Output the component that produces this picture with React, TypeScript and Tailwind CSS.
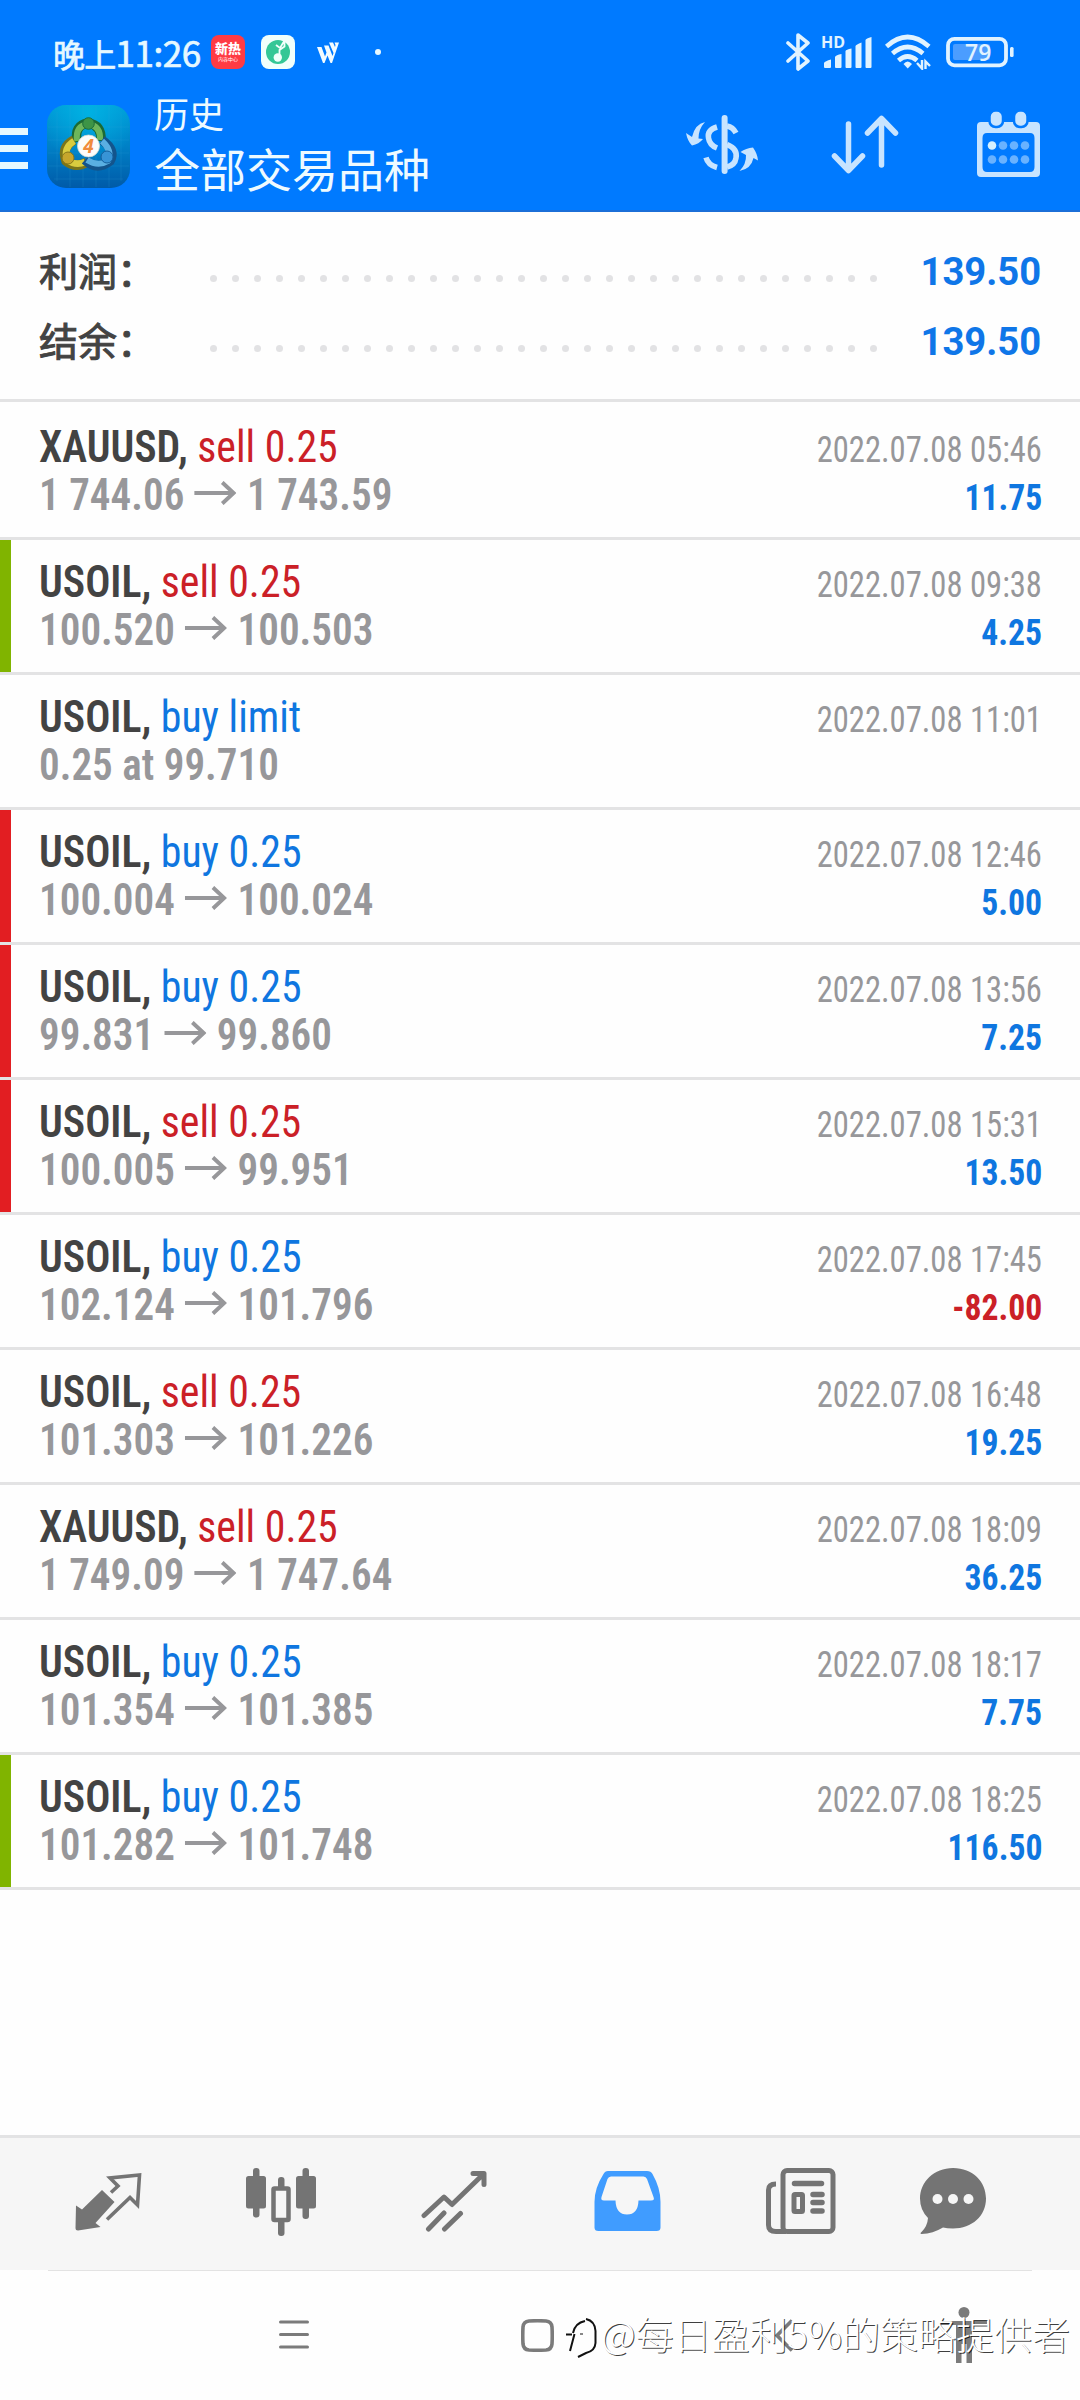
type Deal = {
  symbol: string
  action: string
  side: 'buy' | 'sell'
  from: string
  to?: string
  time: string
  profit?: string
  mark?: 'green' | 'red'
}

const deals: Deal[] = [
  { symbol: 'XAUUSD', action: 'sell 0.25', side: 'sell', from: '1 744.06', to: '1 743.59', time: '2022.07.08 05:46', profit: '11.75' },
  { symbol: 'USOIL', action: 'sell 0.25', side: 'sell', from: '100.520', to: '100.503', time: '2022.07.08 09:38', profit: '4.25', mark: 'green' },
  { symbol: 'USOIL', action: 'buy limit', side: 'buy', from: '0.25 at 99.710', time: '2022.07.08 11:01' },
  { symbol: 'USOIL', action: 'buy 0.25', side: 'buy', from: '100.004', to: '100.024', time: '2022.07.08 12:46', profit: '5.00', mark: 'red' },
  { symbol: 'USOIL', action: 'buy 0.25', side: 'buy', from: '99.831', to: '99.860', time: '2022.07.08 13:56', profit: '7.25', mark: 'red' },
  { symbol: 'USOIL', action: 'sell 0.25', side: 'sell', from: '100.005', to: '99.951', time: '2022.07.08 15:31', profit: '13.50', mark: 'red' },
  { symbol: 'USOIL', action: 'buy 0.25', side: 'buy', from: '102.124', to: '101.796', time: '2022.07.08 17:45', profit: '-82.00' },
  { symbol: 'USOIL', action: 'sell 0.25', side: 'sell', from: '101.303', to: '101.226', time: '2022.07.08 16:48', profit: '19.25' },
  { symbol: 'XAUUSD', action: 'sell 0.25', side: 'sell', from: '1 749.09', to: '1 747.64', time: '2022.07.08 18:09', profit: '36.25' },
  { symbol: 'USOIL', action: 'buy 0.25', side: 'buy', from: '101.354', to: '101.385', time: '2022.07.08 18:17', profit: '7.75' },
  { symbol: 'USOIL', action: 'buy 0.25', side: 'buy', from: '101.282', to: '101.748', time: '2022.07.08 18:25', profit: '116.50', mark: 'green' },
]

const cjk = "font-['Noto_Sans_CJK_SC',sans-serif]"

function StatusBar() {
  return (
    <div className="flex h-[104px] items-center pl-[53px] pr-[66px]">
      <span className={`${cjk} w-[158px] whitespace-nowrap text-[32px] leading-[40px] tracking-[-0.8px] text-[#e6f8ff] [-webkit-text-stroke:0.7px]`}>
        晚上<span className="text-[35px] tracking-[-0.4px]">11:26</span>
      </span>
      <div className={`${cjk} flex size-[34px] flex-col items-center justify-center rounded-[8px] bg-[#ff3b44] text-white`}>
        <span className="text-[13px] leading-[14px] font-black">新热</span>
        <span className="text-[5px] leading-[8px]">内容中心</span>
      </div>
      <svg className="ml-4 size-[34px]" viewBox="0 0 34 34">
        <rect width="34" height="34" rx="8" fill="#f1fffb" />
        <circle cx="17" cy="17" r="12" fill="#35c796" />
        <path d="M15 10 L19 13 L23.500 5.500 V11.500 L18.500 15 V22" fill="none" stroke="#f1fffb" strokeWidth="1.800" />
        <circle cx="16.800" cy="22.500" r="4.200" fill="#f1fffb" />
      </svg>
      <svg className="ml-[22px] h-[21px] w-[22px]" viewBox="0 0 22 21" fill="#f2fbff">
        <path d="M0 5 H4.500 L8 14.500 L9.500 10.500 L7 3.500 H11.500 L15.500 14 L16.500 11 L12 0.500 H16 L18 5 L18.500 3 L17.500 0.500 H22 L15 21 H13.500 L10.500 13.500 L7.500 21 H6 Z" />
      </svg>
      <span className="ml-9 size-[6px] rounded-full bg-[#e6f8ff]" />

      <div className="ml-auto flex items-center text-[#e1f3ff]">
        <svg className="h-[40px] w-[24px]" viewBox="0 0 24 40" fill="none" stroke="currentColor" strokeWidth="3.600" strokeLinecap="round" strokeLinejoin="round">
          <path d="M2 11 L22 29 L12 37 V3 L22 11 L2 29" />
        </svg>
        <svg className="ml-[11px] h-[40px] w-[51px] overflow-visible" viewBox="821 32 51 40" fill="currentColor">
          <text x="821" y="48" fontSize="16" fontWeight="700" fontFamily="Open Sans">HD</text>
          <path d="M824 67V63Q825 61 831 59.500V67Q831 68 830 68H825Q824 68 824 67ZM835 67V57Q836 55 841.500 54V67Q841.500 68 840.500 68H836Q835 68 835 67ZM845.500 67V51Q846 49.500 851.500 48.500V67Q851.500 68 850.500 68H846.500Q845.500 68 845.500 67ZM855.500 67V46Q856 44.500 861.500 42.500V67Q861.500 68 860.500 68H856.500Q855.500 68 855.500 67ZM865.500 67V40Q866 38.500 871.500 37V67Q871.500 68 870.500 68H866.500Q865.500 68 865.500 67Z" />
        </svg>
        <svg className="ml-[13px] h-[36px] w-[46px]" viewBox="885 35 46 36" fill="none" stroke="currentColor" strokeWidth="4.600">
          <path d="M886.500 47.500Q907.500 28.500 929 47.500M892.500 54.500Q907.500 41.500 923 54.500M898.500 61.500Q907.500 53.500 917 61.500" />
          <path d="M903.500 65Q907.500 60 912 65L907.700 69.500Z" fill="currentColor" stroke="none" />
          <path d="M917 64L922 69.500V61M925.500 70V62.500L930 67" strokeWidth="2.400" />
        </svg>
        <svg className="ml-[15px] h-[32px] w-[68px]" viewBox="946 36 68 32">
          <rect x="953" y="44" width="37" height="16" rx="2" fill="#4b9dff" />
          <rect x="948" y="38.800" width="58" height="26.500" rx="6.500" fill="none" stroke="currentColor" strokeWidth="3.800" />
          <rect x="1010" y="47" width="3.600" height="10" rx="1.500" fill="currentColor" />
          <text x="965" y="60.500" fontSize="23" fontWeight="600" fontFamily="Open Sans" fill="currentColor">79</text>
        </svg>
      </div>
    </div>
  )
}

function AppLogo() {
  return (
    <svg className="ml-[19px] mt-[1px] size-[83px]" viewBox="0 0 83 83">
      <defs>
        <linearGradient id="tile" x1="0" y1="0" x2="0" y2="1">
          <stop offset="0" stopColor="#009bd6" />
          <stop offset="0.5" stopColor="#0080c6" />
          <stop offset="1" stopColor="#005aa8" />
        </linearGradient>
        <radialGradient id="glow" cx="0.5" cy="0.1" r="0.6">
          <stop offset="0" stopColor="#00bdea" stopOpacity="0.7" />
          <stop offset="1" stopColor="#00bdea" stopOpacity="0" />
        </radialGradient>
      </defs>
      <rect width="83" height="83" rx="19" fill="url(#tile)" />
      <rect width="83" height="83" rx="19" fill="url(#glow)" />
      <path d="M10 7V76M23 1V82M36 1V82M49 1V82M62 1V82M74 7V76M1 22H82M1 35H82M1 48H82M1 61H82M7 74H76" stroke="#35a8df" strokeWidth="0.6" opacity="0.3" />
      <path d="M30 37Q27 20 41 18Q55 20 54 36" fill="none" stroke="#1b6a35" strokeWidth="9.500" />
      <path d="M30 36Q28 21 41 19Q54 21 53 35" fill="none" stroke="#6db65b" strokeWidth="6" />
      <path d="M27 35Q14 42 19 56Q29 64 40 57" fill="none" stroke="#7a751a" strokeWidth="9.500" />
      <path d="M27 36Q16 43 20 55Q29 61 38 57" fill="none" stroke="#d9cc3f" strokeWidth="6.500" />
      <path d="M55 35Q69 45 63 56Q50 66 38 55" fill="none" stroke="#13548c" strokeWidth="9.500" />
      <path d="M55 36Q66 46 61 56Q51 62 40 55" fill="none" stroke="#5aafe2" strokeWidth="6" />
      <circle cx="41.500" cy="18.500" r="5.800" fill="#3d9446" stroke="#1b6d3a" />
      <circle cx="21" cy="53" r="6" fill="#c7a62c" stroke="#867619" />
      <circle cx="60" cy="52" r="6" fill="#3894d6" stroke="#155f9c" />
      <circle cx="41.500" cy="41" r="11" fill="#fcfcfa" stroke="#cfd8d2" strokeWidth="0.8" />
      <text x="41.500" y="48" textAnchor="middle" fontSize="19" fontStyle="italic" fontWeight="700" fontFamily="Open Sans" fill="#f08b3c">4</text>
    </svg>
  )
}

function AppBar() {
  return (
    <div className="flex h-[106px] pr-10">
      <div className="mt-6 flex h-[41px] w-7 flex-col justify-between">
        <span className="h-[7px] bg-[#e6f8ff]" />
        <span className="h-[7px] bg-[#e6f8ff]" />
        <span className="h-[7px] bg-[#e6f8ff]" />
      </div>
      <AppLogo />
      <div className={`${cjk} ml-6 -mt-[11px] flex flex-col text-[#eefaff]`}>
        <span className="text-[35px] leading-[40px]">历史</span>
        <span className="mt-[6px] text-[46px] leading-[56px]">全部交易品种</span>
      </div>
      <div className="ml-auto flex text-[#c8e4ff]">
        <svg className="mt-[10px] h-[60px] w-[72px]" viewBox="686 115 72 60" fill="none" stroke="currentColor">
          <path d="M724.600 119V172" strokeWidth="6" strokeLinecap="round" />
          <path d="M717 128Q707 131 708.500 139Q709.500 146 717 149M706 158.500Q708 166 717 168.500M727 127Q733 128 736 134M727 145.500Q738 150 736 159Q735 166 727 168" strokeWidth="5.500" />
          <path d="M705 123Q695 125 692 138L686 134Q687.500 142 692 146.500Q699 145 703 140L698.500 139.500Q698.500 130 705 123ZM739.500 172Q751 170 753.500 159L758 161.500Q757.500 155 753 148.500Q746 149 740.500 153L746 156Q746.500 165 739.500 172Z" fill="currentColor" stroke="none" />
        </svg>
        <svg className="ml-[73px] mt-[10px] h-[60px] w-[68px]" viewBox="831 115 68 60" fill="none" stroke="currentColor" strokeWidth="5.500" strokeLinecap="round" strokeLinejoin="round">
          <path d="M848.500 125V171M834.500 157L848.500 171.500L862.500 157M881.500 166V120M867.500 134L881.500 119.500L895.500 134" />
        </svg>
        <svg className="ml-[78px] mt-[8px] h-[66px] w-[63px] overflow-visible" viewBox="977 112 63 66">
          <path fillRule="evenodd" d="M981 122H1036Q1040 122 1040 126V173Q1040 177 1036 177H981Q977 177 977 173V126Q977 122 981 122ZM987 133Q982.500 133 982.500 138V167Q982.500 172 987 172H1030Q1034.500 172 1034.500 167V138Q1034.500 133 1030 133Z" fill="currentColor" />
          <rect x="989.500" y="110.500" width="13.500" height="16.500" rx="6" fill="currentColor" stroke="#007aff" strokeWidth="2.500" />
          <rect x="1014" y="110.500" width="13.500" height="16.500" rx="6" fill="currentColor" stroke="#007aff" strokeWidth="2.500" />
          <g fill="#69b2ff">
            <circle cx="992" cy="145.500" r="4.300" fill="#d6f1ff" />
            <circle cx="1003" cy="145.500" r="4.300" />
            <circle cx="1014" cy="145.500" r="4.300" />
            <circle cx="1025" cy="145.500" r="4.300" />
            <circle cx="992" cy="159.500" r="4.300" />
            <circle cx="1003" cy="159.500" r="4.300" />
            <circle cx="1014" cy="159.500" r="4.300" />
            <circle cx="1025" cy="159.500" r="4.300" />
          </g>
        </svg>
      </div>
    </div>
  )
}

function SummaryRow({ label, value }: { label: string; value: string }) {
  return (
    <div className="flex h-[70px] items-center">
      <span className={`${cjk} -mt-[5px] w-[171px] whitespace-nowrap text-[39px] leading-[50px] text-[#434343] [-webkit-text-stroke:1px]`}>{label}</span>
      <div className="mt-[15px] flex w-[667px] justify-between">
        {Array.from({ length: 31 }, (_, i) => (
          <span key={i} className="size-[7px] rounded-full bg-[#e2e2e4]" />
        ))}
      </div>
      <span className="ml-auto mt-[2px] origin-right scale-x-[0.98] font-['Roboto'] text-[39px] leading-[50px] font-bold text-[#0f76e8]">{value}</span>
    </div>
  )
}

function PriceArrow() {
  return (
    <svg className="mx-[11px] inline-block h-[24px] w-[45px] align-[5px]" viewBox="0 0 45 24" fill="none" stroke="#97979a" strokeWidth="4.200">
      <path d="M0 12H42M30 1.500L42 12L30 22.500" />
    </svg>
  )
}

function DealRow({ deal, first }: { deal: Deal; first: boolean }) {
  const mark = deal.mark === 'green' ? 'bg-[#80b400]' : deal.mark === 'red' ? 'bg-[#e21e22]' : ''
  return (
    <div className={`flex border-b-[3px] border-[#e3e3e4] ${first ? 'h-[138px]' : 'h-[135px]'}`}>
      <div className={`w-[11px] ${mark}`} />
      <div className={`flex-1 pl-[28px] pr-[38px] font-['Roboto_Condensed'] ${first ? 'pt-[21px]' : 'pt-[18px]'}`}>
        <div className="flex h-12 items-baseline justify-between text-[44px] leading-[48px] whitespace-nowrap">
          <span className="origin-left scale-x-[0.95]">
            <span className="font-semibold text-[#434343]">{deal.symbol},</span>{' '}
            <span className={deal.side === 'sell' ? 'text-[#cb2027]' : 'text-[#0f76e0]'}>{deal.action}</span>
          </span>
          <span className="origin-right scale-x-[0.905] text-[36px] text-[#97979a]">{deal.time}</span>
        </div>
        <div className="flex h-12 items-baseline justify-between text-[44px] leading-[48px] whitespace-nowrap">
          <span className="origin-left scale-x-[0.935] font-semibold text-[#97979a]">
            {deal.from}
            {deal.to && <PriceArrow />}
            {deal.to}
          </span>
          {deal.profit && (
            <span className={`origin-right scale-x-[0.935] text-[36px] font-bold ${deal.profit.startsWith('-') ? 'text-[#cb2027]' : 'text-[#0f76e0]'}`}>
              {deal.profit}
            </span>
          )}
        </div>
      </div>
    </div>
  )
}

function TabBar() {
  return (
    <div className="flex h-[135px] border-t-[3px] border-[#e3e3e4] bg-[#f6f6f6] pt-[29px] text-[#747474]">
      <svg className="ml-[74px] h-[70px] w-[70px]" viewBox="74 2167 70 70">
        <path d="M76 2205.500L82 2209.500L102 2190L114.500 2202L95.500 2223L100.500 2227L78 2230.500Q75.500 2230.500 75.500 2228Z" fill="currentColor" />
        <path d="M111 2192.500L118 2186L110 2178L139.500 2175L137.500 2205L130 2197.500L107 2219.500" fill="none" stroke="currentColor" strokeWidth="3.600" />
      </svg>
      <svg className="ml-[102px] h-[70px] w-[70px]" viewBox="246 2167 70 70" fill="currentColor">
        <rect x="253" y="2168" width="6.500" height="49.500" rx="3" />
        <rect x="246" y="2176" width="20" height="32.500" rx="2.500" />
        <rect x="302.500" y="2168" width="6.500" height="51" rx="3" />
        <rect x="296" y="2176" width="20" height="32.500" rx="2.500" />
        <rect x="278" y="2177" width="6.500" height="59" rx="3" />
        <rect x="273.500" y="2188.500" width="15" height="31.500" rx="1" fill="#f6f6f6" stroke="currentColor" strokeWidth="4.500" />
      </svg>
      <svg className="ml-[105px] h-[70px] w-[68px]" viewBox="421 2167 68 70" fill="none" stroke="currentColor" strokeWidth="5" strokeLinecap="round" strokeLinejoin="round">
        <path d="M424 2215.500L444 2197L452 2204.500L483.500 2174M473 2173.500H484V2184.500M428.500 2229L444 2213M444.500 2229L460.500 2213.500" />
      </svg>
      <svg className="ml-[105px] h-[70px] w-[68px]" viewBox="594 2167 68 70">
        <path fillRule="evenodd" d="M608 2171H647Q651 2171 652.500 2174Q660.500 2188 660.500 2202V2227.500Q660.500 2231 656.500 2231H598.500Q594.500 2231 594.500 2227.500V2202Q594.500 2188 603.500 2174Q605 2171 608 2171ZM611 2176.500Q608.500 2176.500 607.500 2179L601.500 2197Q600.500 2200.500 604 2200.500H615.500Q616 2214.500 627 2214.500Q638 2214.500 638.500 2200.500H651Q655 2200.500 653.500 2197L647 2179Q646 2176.500 643.500 2176.500Z" fill="#409cff" />
      </svg>
      <svg className="ml-[104px] h-[70px] w-[71px]" viewBox="766 2167 71 70" fill="none" stroke="currentColor" strokeWidth="5">
        <path d="M776 2184Q768.500 2184 768.500 2190V2225Q768.500 2231.500 776 2231.500H786" />
        <rect x="783" y="2170.500" width="50" height="61" rx="4" />
        <path d="M794.500 2183.500H821.500M813 2194.500H822M813 2202.500H822M813 2211H822" strokeWidth="5.500" strokeLinecap="round" />
        <rect x="794" y="2194.500" width="8.500" height="17" rx="1" />
      </svg>
      <svg className="ml-[83px] h-[70px] w-[67px]" viewBox="920 2167 67 70">
        <path d="M953 2168C973 2168 986 2182 986 2198.500C986 2216 972 2228.500 953 2228.500Q947 2228.500 943 2227.500Q933 2233.500 921.500 2234Q919.500 2233.500 921.500 2232Q927.500 2226 928 2218Q920 2210 920 2198.500C920 2182 934 2168 953 2168Z" fill="currentColor" />
        <g fill="#f6f6f6">
          <circle cx="937.500" cy="2199" r="5" />
          <circle cx="953" cy="2199" r="5" />
          <circle cx="968.500" cy="2199" r="5" />
        </g>
      </svg>
    </div>
  )
}

function SystemNav() {
  return (
    <div className="relative h-[130px] bg-[#fefefe]">
      <div className="mx-12 h-px bg-[#e3e3e3]" />
      <div className="flex pt-[36px] text-[#7b7b7b]">
        <svg className="ml-[279px] mt-[13px] h-[30px] w-[30px]" viewBox="0 0 30 30" stroke="currentColor" strokeWidth="3" strokeLinecap="round">
          <path d="M1.500 2H28.500M1.500 14.500H28.500M1.500 27H28.500" />
        </svg>
        <svg className="ml-[212px] mt-[12px] size-[33px]" viewBox="0 0 33 33" fill="none" stroke="currentColor" strokeWidth="3.600">
          <path d="M8 2Q16.500 1.500 25 2Q30.500 2.500 31 8Q31.500 16.500 31 25Q30.500 30.500 25 31Q16.500 31.500 8 31Q2.500 30.500 2 25Q1.500 16.500 2 8Q2.500 2.500 8 2Z" />
        </svg>
        <svg className="ml-[219px] mt-[12px] h-[33px] w-[20px]" viewBox="0 0 20 33" fill="none" stroke="currentColor" strokeWidth="3.600">
          <path d="M19 1.500L4 16.500L19 31.500" />
        </svg>
        <svg className="ml-[148px] h-[56px] w-[46px]" viewBox="0 0 46 56" fill="currentColor">
          <circle cx="23" cy="5.500" r="5.500" />
          <path d="M0 14H46V18H31V56H25.500V37H20.500V56H15V18H0Z" />
        </svg>
      </div>
      {/* author signature laid over the navigation buttons */}
      <div className={`${cjk} absolute left-[565px] top-[35px] flex items-center text-[38px] leading-[56px] font-light whitespace-nowrap text-white [text-shadow:1px_1px_0_rgba(0,0,0,0.75)]`}>
        <svg className="mt-2 h-[46px] w-[36px] shrink-0" viewBox="0 0 36 46" fill="none" stroke="#111" strokeWidth="2">
          <path d="M5 37L9.500 20M1 20.500H7M8 19Q10 9 20 7M21 5Q30 7 30.500 17V29Q30 37 21 39L13 43" />
          <path d="M15 20H18" strokeWidth="1" />
        </svg>
        @每日盈利5%的策略提供者
      </div>
    </div>
  )
}

export default function App() {
  return (
    <div className="flex h-[2400px] w-[1080px] flex-col overflow-hidden bg-[#fefefe]">
      <header className="h-[212px] border-b-2 border-[#1b6fd8] bg-[#007aff]">
        <StatusBar />
        <AppBar />
      </header>
      <section className="h-[190px] border-b-[3px] border-[#e3e3e4] pl-[39px] pr-[39px] pt-[24px]">
        <SummaryRow label="利润：" value="139.50" />
        <SummaryRow label="结余：" value="139.50" />
      </section>
      <main className="flex-1">
        {deals.map((deal, i) => (
          <DealRow key={i} deal={deal} first={i === 0} />
        ))}
      </main>
      <TabBar />
      <SystemNav />
    </div>
  )
}
